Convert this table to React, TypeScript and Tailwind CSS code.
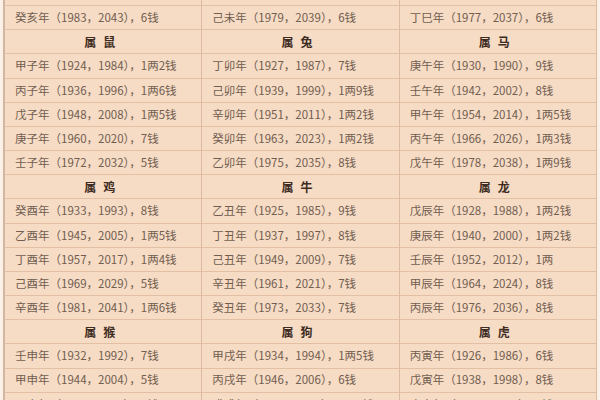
import React from 'react';

type Block = { title: string; rows: string[] };

// three columns, four blocks each; the first block is cut off at the top of the shot
const columns: Block[][] = [
  [
    { title: '猪', rows: ['辛亥年（1971，2031），1两7钱', '癸亥年（1983，2043），6钱'] },
    {
      title: '鼠',
      rows: [
        '甲子年（1924，1984），1两2钱',
        '丙子年（1936，1996），1两6钱',
        '戊子年（1948，2008），1两5钱',
        '庚子年（1960，2020），7钱',
        '壬子年（1972，2032），5钱',
      ],
    },
    {
      title: '鸡',
      rows: [
        '癸酉年（1933，1993），8钱',
        '乙酉年（1945，2005），1两5钱',
        '丁酉年（1957，2017），1两4钱',
        '己酉年（1969，2029），5钱',
        '辛酉年（1981，2041），1两6钱',
      ],
    },
    { title: '猴', rows: ['壬申年（1932，1992），7钱', '甲申年（1944，2004），5钱', '丙申年（1956，2016），5钱'] },
  ],
  [
    { title: '羊', rows: ['丁未年（1967，2027），5钱', '己未年（1979，2039），6钱'] },
    {
      title: '兔',
      rows: [
        '丁卯年（1927，1987），7钱',
        '己卯年（1939，1999），1两9钱',
        '辛卯年（1951，2011），1两2钱',
        '癸卯年（1963，2023），1两2钱',
        '乙卯年（1975，2035），8钱',
      ],
    },
    {
      title: '牛',
      rows: [
        '乙丑年（1925，1985），9钱',
        '丁丑年（1937，1997），8钱',
        '己丑年（1949，2009），7钱',
        '辛丑年（1961，2021），7钱',
        '癸丑年（1973，2033），7钱',
      ],
    },
    { title: '狗', rows: ['甲戌年（1934，1994），1两5钱', '丙戌年（1946，2006），6钱', '戊戌年（1958，2018），1两4钱'] },
  ],
  [
    { title: '蛇', rows: ['乙巳年（1965，2025），7钱', '丁巳年（1977，2037），6钱'] },
    {
      title: '马',
      rows: [
        '庚午年（1930，1990），9钱',
        '壬午年（1942，2002），8钱',
        '甲午年（1954，2014），1两5钱',
        '丙午年（1966，2026），1两3钱',
        '戊午年（1978，2038），1两9钱',
      ],
    },
    {
      title: '龙',
      rows: [
        '戊辰年（1928，1988），1两2钱',
        '庚辰年（1940，2000），1两2钱',
        '壬辰年（1952，2012），1两',
        '甲辰年（1964，2024），8钱',
        '丙辰年（1976，2036），8钱',
      ],
    },
    { title: '虎', rows: ['丙寅年（1926，1986），6钱', '戊寅年（1938，1998），8钱', '庚寅年（1950，2010），9钱'] },
  ],
];

const Column = ({ blocks }: { blocks: Block[] }) => (
  <div className="flex flex-col border-r border-[#dcbba1]">
    {blocks.map((b, i) => (
      <React.Fragment key={b.title}>
        {i > 0 && (
          <div className="h-[24.17px] flex items-center justify-center border-b border-[#e3c0a4] text-[12px] font-bold text-[#3e2c22] tracking-[7px]">
            属{b.title}
          </div>
        )}
        {b.rows.map((r) => (
          <div
            key={r}
            className="h-[24.17px] flex items-center pl-[10px] border-b border-[#e3c0a4] text-[11.5px] text-[#715e50] whitespace-nowrap"
          >
            {r}
          </div>
        ))}
      </React.Fragment>
    ))}
  </div>
);

export default function App() {
  return (
    <div
      className="w-[600px] h-[400px] overflow-hidden bg-[#fbf1e8]"
      style={{ fontFamily: '"Noto Sans CJK SC", "Noto Sans", sans-serif' }}
    >
      <div className="ml-[3px] w-[594px] -mt-[18px] grid grid-cols-3 bg-[#f6dbc5] border-l-2 border-[#cfb7a4]">
        {columns.map((c, i) => (
          <Column key={i} blocks={c} />
        ))}
      </div>
    </div>
  );
}
